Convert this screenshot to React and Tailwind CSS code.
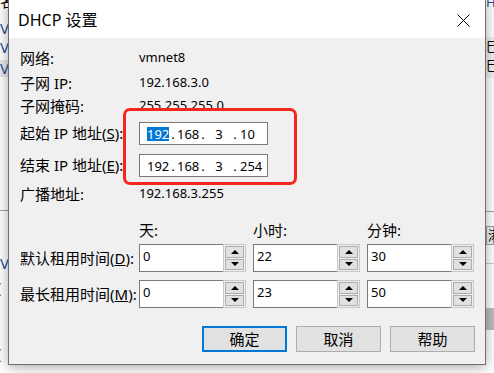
import React from "react";

const Spin = ({ value }) => (
  <div className="flex w-[107px] h-[28px]">
    <div className="flex-1 bg-white border border-r-0 border-[#7a7a7a] pl-[3px] pt-[2px] text-[13px] leading-[18px]">
      {value}
    </div>
    <div className="w-[23px] h-full border border-[#c8c8c8] bg-[#f0f0f0] p-[1px] flex flex-col gap-[1px]">
      <div className="flex-1 border border-[#adadad] bg-[#e1e1e1] flex items-center justify-center">
        <div className="w-0 h-0 border-x-[4px] border-x-transparent border-b-[4px] border-b-black" />
      </div>
      <div className="flex-1 border border-[#adadad] bg-[#e1e1e1] flex items-center justify-center">
        <div className="w-0 h-0 border-x-[4px] border-x-transparent border-t-[4px] border-t-black" />
      </div>
    </div>
  </div>
);

const IpBox = ({ last, selected }) => (
  <div className="w-[129px] h-[23px] bg-white border border-[#7a7a7a] flex items-center pl-[7px] text-[13px] leading-[14px]">
    <span className={selected ? "w-[22px] bg-[#0078d7] text-white" : "w-[22px]"}>192</span>
    <span className="w-[8px] text-center">.</span>
    <span className="w-[21px]">168</span>
    <span className="w-[10px] text-center">.</span>
    <span className="w-[22px] text-center">3</span>
    <span className="w-[10px] text-center">.</span>
    <span>{last}</span>
  </div>
);

const InfoRow = ({ label, value, h = "h-[22px]", mt = "" }) => (
  <div className={`flex items-center ${h} ${mt}`}>
    <span className="w-[119px] shrink-0 text-[15px]">{label}</span>
    {typeof value === "string" ? <span className="text-[13px]">{value}</span> : value}
  </div>
);

const Btn = ({ children, primary }) => (
  <button
    className={
      primary
        ? "w-[85px] h-[26px] bg-[#e1e1e1] border-2 border-[#0078d7] text-[15px] leading-none"
        : "w-[85px] h-[26px] bg-[#e1e1e1] border border-[#adadad] text-[15px] leading-none"
    }
  >
    {children}
  </button>
);

export default function App() {
  return (
    <div
      className="relative w-[494px] h-[373px] bg-white overflow-hidden text-black"
      style={{ fontFamily: '"Noto Sans", "Noto Sans CJK SC", sans-serif' }}
    >
      {/* page behind the dialog */}
      <div className="absolute left-0 top-0 w-[8px] h-full text-[15px] leading-none">
        <div className="absolute -top-[6px] left-0">名</div>
        <div className="absolute top-[21px] left-0 text-[#1a4f9c]">V</div>
        <div className="absolute top-[40px] left-0 text-[#1a4f9c]">V</div>
        <div className="absolute top-[60px] left-0 w-[8px] h-[17px] bg-[#e8e8e8]" />
        <div className="absolute top-[61px] left-0 text-[#1a4f9c]">V</div>
        <div className="absolute top-[210px] left-0 w-[8px] h-px bg-[#a0a0a0]" />
        <div className="absolute top-[256px] left-0 text-[#1a4f9c]">V</div>
        <div className="absolute top-[280px] left-[-3px] text-[#555]">(</div>
        <div className="absolute top-[346px] left-[-3px] text-[#555]">(</div>
      </div>
      <div className="absolute left-[486px] top-0 w-[8px] h-full text-[13px] leading-[13px] overflow-hidden">
        <div className="absolute -top-[4px] left-0 text-[#1a4f9c]">HC</div>
        <div className="absolute top-[37px] left-0 w-[8px] h-[41px] bg-[#f0f0f0]" />
        <div className="absolute top-[40px] left-0">巳</div>
        <div className="absolute top-[59px] left-0">巳</div>
        <div className="absolute top-[211px] left-0 w-[8px] h-px bg-[#a0a0a0]" />
        <div className="absolute top-[226px] left-0 w-[8px] h-[19px] border border-[#a0a0a0] bg-[#f0f0f0] pl-[1px] pt-[2px]">添</div>
        <div className="absolute top-[263px] left-0 w-[8px] h-px bg-[#c8c8c8]" />
        <div className="absolute top-[308px] left-0 w-[8px] h-[22px] bg-[#bdbdbd]" />
      </div>

      {/* dialog window */}
      <div className="absolute left-[8px] top-[-1px] w-[478px] h-[366px] border border-[#707070] bg-[#f0f0f0] shadow-[0_2px_12px_rgba(0,0,0,0.35)] flex flex-col">
        <div className="h-[38px] bg-white flex items-center justify-between pl-[9px] pr-[15px] shrink-0">
          <span className="text-[16px] pt-[1px]">DHCP 设置</span>
          <svg width="13" height="13" viewBox="0 0 13 13" className="mt-[2px]">
            <path d="M0.5 0.5 L12.5 12.5 M12.5 0.5 L0.5 12.5" stroke="#000" strokeWidth="1" />
          </svg>
        </div>

        <div className="relative flex-1 pl-[11px] pt-[9px] flex flex-col">
          <InfoRow label="网络:" value="vmnet8" />
          <InfoRow label="子网 IP:" value="192.168.3.0" mt="mt-[3px]" />
          <InfoRow label="子网掩码:" value="255.255.255.0" mt="mt-[1px]" />
          <InfoRow
            label={<>起始 IP 地址(<span className="underline">S</span>):</>}
            value={<IpBox last="10" selected />}
            h="h-[23px]"
            mt="mt-[5px]"
          />
          <InfoRow
            label={<>结束 IP 地址(<span className="underline">E</span>):</>}
            value={<IpBox last="254" />}
            h="h-[23px]"
            mt="mt-[9px]"
          />
          <InfoRow label="广播地址:" value="192.168.3.255" mt="mt-[6px]" />

          <div className="flex items-center h-[20px] mt-[15px] text-[15px]">
            <span className="w-[119px] shrink-0" />
            <div className="flex gap-[7px]">
              <span className="w-[107px]">天:</span>
              <span className="w-[107px]">小时:</span>
              <span className="w-[107px]">分钟:</span>
            </div>
          </div>
          <div className="flex items-center mt-[4px]">
            <span className="w-[119px] shrink-0 text-[15px]">
              默认租用时间(<span className="underline">D</span>):
            </span>
            <div className="flex gap-[7px]">
              <Spin value="0" />
              <Spin value="22" />
              <Spin value="30" />
            </div>
          </div>
          <div className="flex items-center mt-[8px]">
            <span className="w-[119px] shrink-0 text-[15px]">
              最长租用时间(<span className="underline">M</span>):
            </span>
            <div className="flex gap-[7px]">
              <Spin value="0" />
              <Spin value="23" />
              <Spin value="50" />
            </div>
          </div>

          <div className="flex justify-end gap-[9px] pr-[10px] mt-[18px]">
            <Btn primary>确定</Btn>
            <Btn>取消</Btn>
            <Btn>帮助</Btn>
          </div>

          {/* red annotation frame */}
          <div className="absolute left-[114px] top-[70px] w-[174px] h-[77px] border-[3px] border-[#f5261c] rounded-[7px]" />
        </div>
      </div>
    </div>
  );
}
